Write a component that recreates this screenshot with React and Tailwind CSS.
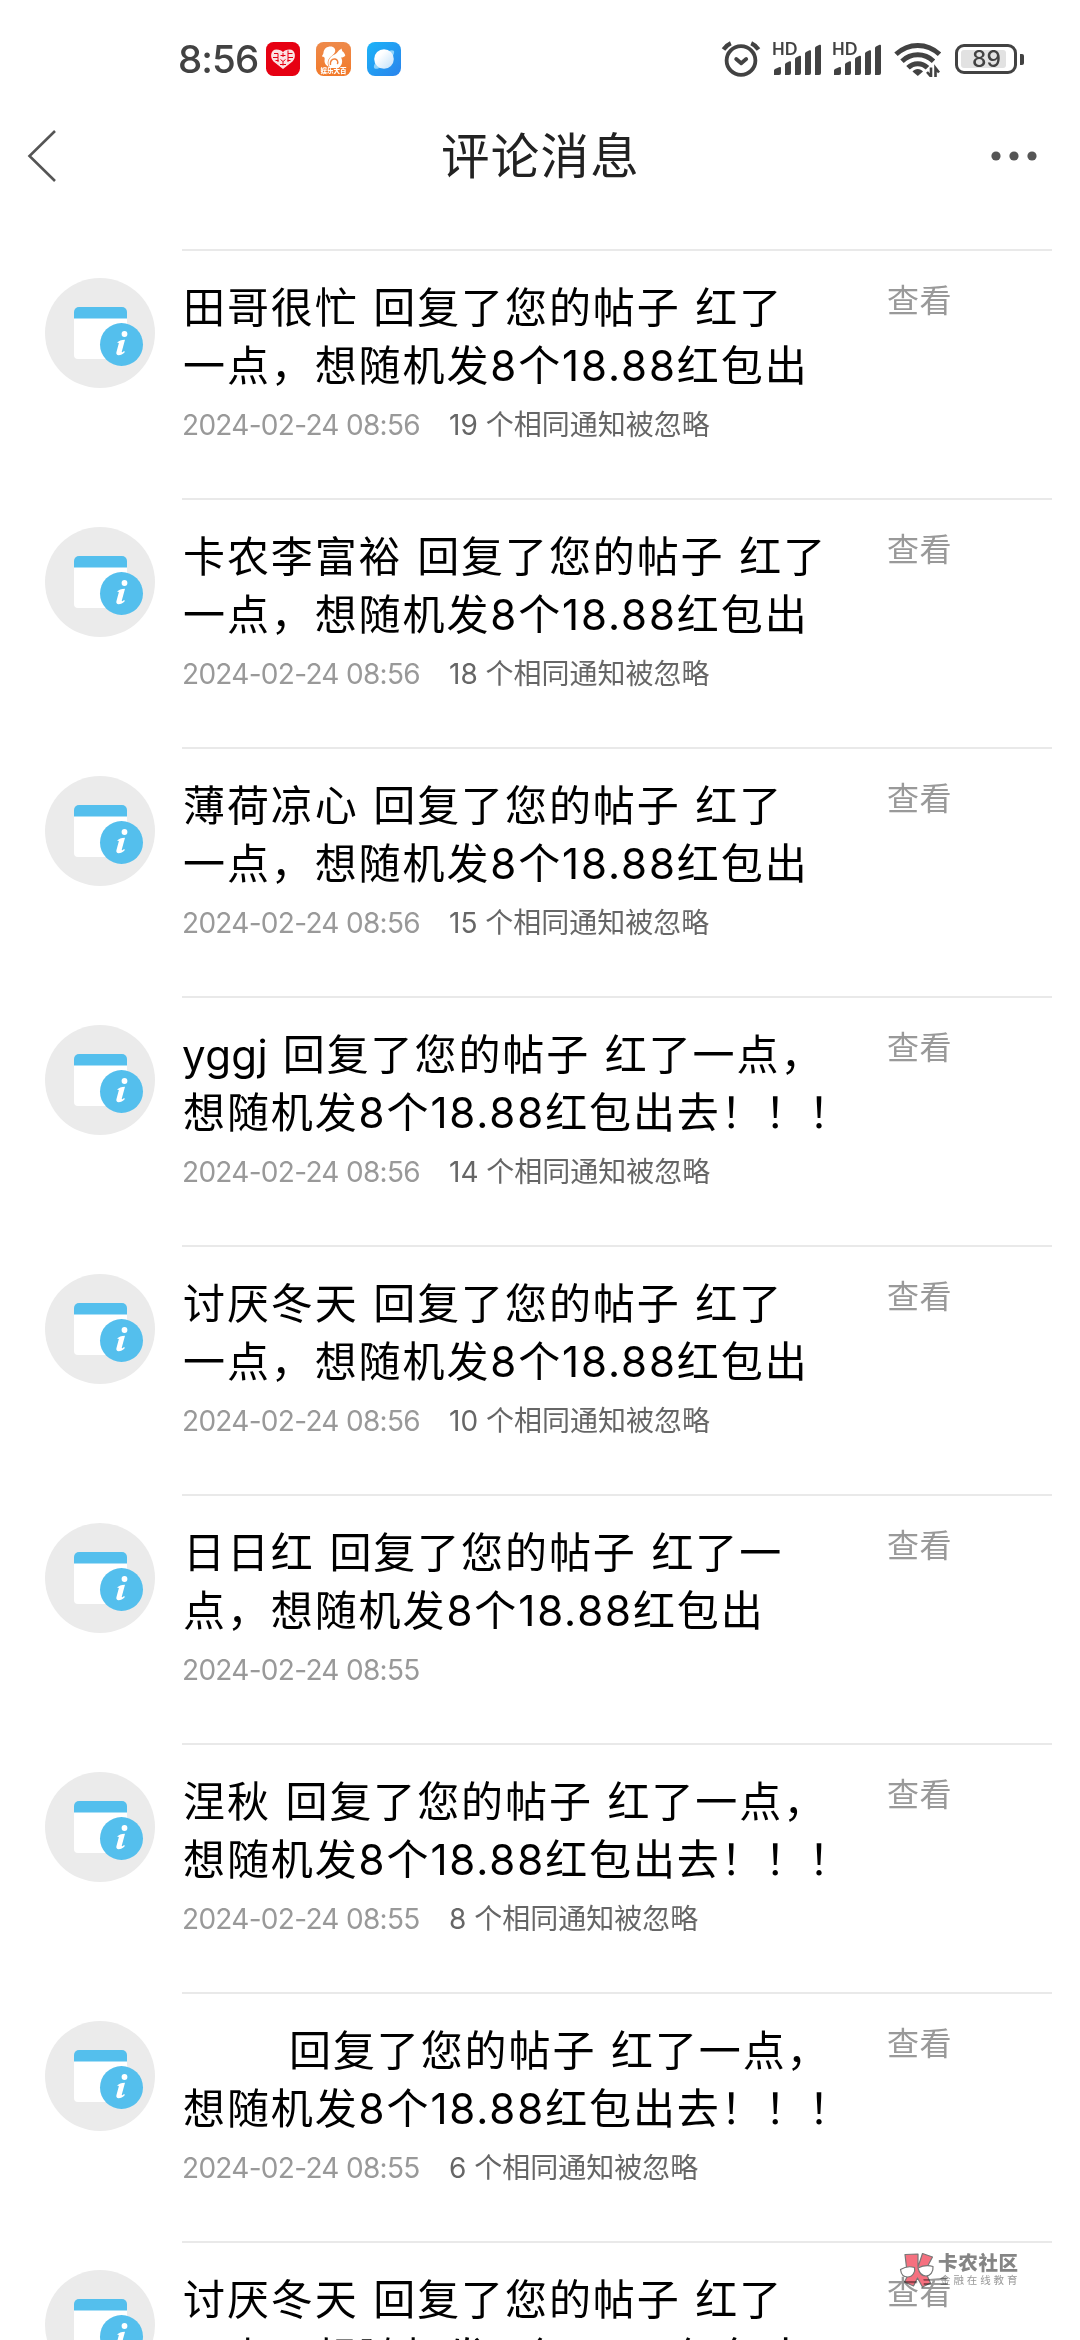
const TITLE_TAIL = "一点，想随机发8个18.88红包出";

const messages = [
  { lines: ["田哥很忙 回复了您的帖子 红了", TITLE_TAIL], time: "2024-02-24 08:56", ignored: 19 },
  { lines: ["卡农李富裕 回复了您的帖子 红了", TITLE_TAIL], time: "2024-02-24 08:56", ignored: 18 },
  { lines: ["薄荷凉心 回复了您的帖子 红了", TITLE_TAIL], time: "2024-02-24 08:56", ignored: 15 },
  { latinName: "yggj", lines: [" 回复了您的帖子 红了一点，", "想随机发8个18.88红包出去！！！"], time: "2024-02-24 08:56", ignored: 14 },
  { lines: ["讨厌冬天 回复了您的帖子 红了", TITLE_TAIL], time: "2024-02-24 08:56", ignored: 10 },
  { lines: ["日日红 回复了您的帖子 红了一", "点，想随机发8个18.88红包出"], time: "2024-02-24 08:55" },
  { lines: ["涅秋 回复了您的帖子 红了一点，", "想随机发8个18.88红包出去！！！"], time: "2024-02-24 08:55", ignored: 8 },
  { blankName: true, lines: ["回复了您的帖子 红了一点，", "想随机发8个18.88红包出去！！！"], time: "2024-02-24 08:55", ignored: 6 },
  { lines: ["讨厌冬天 回复了您的帖子 红了", TITLE_TAIL], time: "2024-02-24 08:55" },
];

function HeartApp() {
  return (
    <svg width="34" height="34" viewBox="0 0 34 34">
      <rect width="34" height="34" rx="7.5" fill="#e60012" />
      <path d="M17 27 7.500 19.500C3.500 15.500 4.500 7.500 10.500 7.500c3 0 5.300 1 6.500 2.700 1.200-1.700 3.500-2.700 6.500-2.700 6 0 7 8 3 12z" fill="#fbe3e3" />
      <g stroke="#e60012" strokeWidth="1" fill="none">
        <path d="M8 11.500h4v4H7M12 15.500v4.500M17 11v4M14.500 13.500h5M22 11.500h4.500M22 8.500v7h5M22 15.500v4.500M9.500 18.500h3M21.500 18.500h3M14.500 17.500l2.500 2 2.500-2M17 19.500v4M14 22.500h6" />
      </g>
    </svg>
  );
}

function SquirrelApp() {
  return (
    <div className="relative h-[34px] w-[35px]">
      <svg width="35" height="34" viewBox="0 0 35 34">
        <defs>
          <linearGradient id="squirrel" x1="0" y1="0" x2="0" y2="1">
            <stop offset="0" stopColor="#ee8a4b" />
            <stop offset="1" stopColor="#f27a2a" />
          </linearGradient>
        </defs>
        <rect width="35" height="34" rx="7.500" fill="url(#squirrel)" />
        <path d="M6 14.500c0-1.500 1.500-2 1.500-4C8 6.500 11 4.500 14.500 4.500c3.500 0 5.500 2.500 4.500 5.500-1 2.800-5 4.500-6.500 7.500-1.300 2.700-1 5 .5 7.500-3.500-1.500-5-4.500-4.300-8 .2-1.500-.7-2.500-2.700-2.500z" fill="#fff" />
        <path d="M22 9.500c1-1.500 2.500-2 3.500-3l.8 2.800c1.700 1 2.500 2.700 3 4.200-1 1.700-2.500 1.900-4.300 2 2.200 3.500 1.200 8-2.500 10.500h-8c-3.500-3.500-2.500-9 1.500-12 2-1.500 4.500-2 6-4.500z" fill="#fff" />
        <path d="M14.500 23c-.8-3.500 1.500-6.500 4.500-6 2.500.5 3.500 3 2.300 5" fill="none" stroke="#f0803a" strokeWidth="1.500" />
      </svg>
      <span className="absolute inset-x-0 bottom-[1px] text-center text-[6.500px] leading-[7px] font-black whitespace-nowrap text-white">
        娱乐大百
      </span>
    </div>
  );
}

function PlanetApp() {
  return (
    <svg width="34" height="34" viewBox="0 0 34 34">
      <defs>
        <linearGradient id="sky" x1="0" y1="0" x2="1" y2="1">
          <stop offset="0" stopColor="#1cb4f8" />
          <stop offset="1" stopColor="#2a83ec" />
        </linearGradient>
        <linearGradient id="globe" x1="0" y1="0" x2="1" y2="1">
          <stop offset="0.300" stopColor="#fff" />
          <stop offset="1" stopColor="#bfe0fa" />
        </linearGradient>
      </defs>
      <rect width="34" height="34" rx="8" fill="url(#sky)" />
      <ellipse cx="17" cy="17.500" rx="13" ry="4.500" transform="rotate(-42 17 17.500)" fill="#8fd3fb" />
      <circle cx="17" cy="17" r="9.800" fill="url(#globe)" />
    </svg>
  );
}

function AlarmIcon() {
  return (
    <svg width="40" height="38" viewBox="0 0 40 38" fill="none" stroke="#424242" strokeWidth="3.800" strokeLinecap="round" strokeLinejoin="round">
      <circle cx="20" cy="20.500" r="14.400" />
      <path d="m15.200 19 5 4.300 5-4.300" />
      <path d="M2.500 9.500c1.800-2.700 4.300-5 7.300-6.300M37.500 9.500c-1.800-2.700-4.300-5-7.300-6.300" strokeLinecap="butt" strokeWidth="4.200" />
    </svg>
  );
}

function SignalIcon() {
  return (
    <div className="relative h-[34px] w-[50px]">
      <span className="absolute -top-[1px] left-0 font-['Lato'] text-[16.500px] leading-[16px] font-bold text-[#424242]">HD</span>
      <svg width="50" height="34" viewBox="0 0 50 34" fill="#424242">
        <path d="M2 33V28.500q0-1 1-1.500l4.500-2q1.500-.5 1.500 1V31q0 2-2 2zM13 33V22.500q0-1 1-1.500l3.500-1.700q1.500-.5 1.500 1V31q0 2-2 2zM23 33V17q0-1 1-1.500l3.500-1.700q1.500-.5 1.500 1V31q0 2-2 2zM33 33V11.500q0-1 1-1.500l3.500-1.700q1.500-.5 1.500 1V31q0 2-2 2zM43 33V6q0-1 1-1.500l3.500-1.700q1.500-.5 1.500 1V31q0 2-2 2z" />
      </svg>
    </div>
  );
}

function WifiIcon() {
  return (
    <svg width="48" height="36" viewBox="0 0 48 36" fill="none" stroke="#424242" strokeWidth="5">
      <path d="M2 13.300C14.500 1.500 33 1.500 45.500 13.300" />
      <path d="M8 20.200c9-8.500 22.500-8.500 31.500 0" />
      <path d="M14 26.800c5.500-5.500 14-5.500 19.500 0" />
      <path d="m18.500 30.500c2.500-3.500 8-3.500 10.500 0l-5.200 4.500z" fill="#424242" stroke="none" />
      <path d="M37 26.500v9l-4-4.500M41.500 36V27l3.500 4.500" strokeWidth="2.600" />
    </svg>
  );
}

function Battery() {
  return (
    <div className="flex items-center gap-[3px]">
      <div className="flex h-[30px] w-[62px] rounded-[9px] border-[3px] border-[#424242] p-[3px]">
        <div className="flex w-[45px] items-center justify-center rounded-[3px] bg-[#e2e2e2] pl-[6px] text-[23px] leading-none font-medium text-[#424242]">
          89
        </div>
      </div>
      <div className="h-[11px] w-[4px] rounded-r-[2px] bg-[#424242]" />
    </div>
  );
}

function StatusBar() {
  return (
    <div className="flex h-[118px] items-center pr-[56px] pl-[178px]">
      <span className="w-[88px] text-[38.500px] leading-none font-medium tracking-[-0.900px] text-[#424242]">8:56</span>
      <div className="flex gap-4">
        <HeartApp />
        <SquirrelApp />
        <PlanetApp />
      </div>
      <div className="ml-auto flex items-center">
        <AlarmIcon />
        <div className="ml-[11px] flex gap-[10px]">
          <SignalIcon />
          <SignalIcon />
        </div>
        <div className="ml-[12px]">
          <WifiIcon />
        </div>
        <div className="ml-[13px]">
          <Battery />
        </div>
      </div>
    </div>
  );
}

function TitleBar() {
  return (
    <header className="flex h-[76px] items-center justify-between pr-[42px] pl-[27px]">
      <svg width="64" height="54" viewBox="0 0 64 54" fill="none" stroke="#555" strokeWidth="2.600">
        <path d="M28 2 2.500 27 28 52" />
      </svg>
      <h1 className="pt-[2px] text-[48.500px] leading-none tracking-[1.200px] text-[#222]">评论消息</h1>
      <svg width="48" height="12" viewBox="0 0 48 12" fill="#555">
        <circle cx="6" cy="6" r="4.600" />
        <circle cx="24" cy="6" r="4.600" />
        <circle cx="42" cy="6" r="4.600" />
      </svg>
    </header>
  );
}

function NoticeAvatar() {
  return (
    <svg className="shrink-0" width="110" height="110" viewBox="0 0 110 110">
      <circle cx="55" cy="55" r="55" fill="#ebebeb" />
      <path d="M29 40h53v37a4 4 0 0 1-4 4H33a4 4 0 0 1-4-4z" fill="#fff" />
      <path d="M29 40.500V34a5 5 0 0 1 5-5h43a5 5 0 0 1 5 5v6.500z" fill="#54bfed" />
      <circle cx="76.500" cy="66.500" r="21.500" fill="#54bfed" />
      <circle cx="79.500" cy="56" r="2.900" fill="#fff" />
      <path d="M72 64.500c2-1.500 4-2.500 8-2.700l-3.200 11.700c-.2 1 .6.800 2.300-.6l.8 1c-2 2.200-4.300 3.300-6.300 3.300-1.800 0-2.600-1.200-2.200-2.900l2.500-9.200z" fill="#fff" />
    </svg>
  );
}

function MessageRow({ message }) {
  return (
    <li className="flex h-[249px] pl-[45px]">
      <div className="pt-[29px]">
        <NoticeAvatar />
      </div>
      <div className="ml-[27px] flex w-[870px] border-t-2 border-[#e9e9e9]">
        <div className="w-[705px] pt-[28px]">
          <div className="pl-px text-[42px] leading-[58px] tracking-[1.900px] whitespace-nowrap text-black [word-spacing:1px]">
            {message.lines.map((line, i) => (
              <p key={i} className={message.blankName && i === 0 ? "pl-[106px]" : ""}>
                {i === 0 && message.latinName && <span className="-ml-px tracking-[0.400px]">{message.latinName}</span>}
                {line}
              </p>
            ))}
          </div>
          <div className="mt-[10px] flex gap-[29px] text-[28px] leading-[40px] whitespace-nowrap">
            <time className="w-[238px] tracking-[-0.700px] text-[#999]">{message.time}</time>
            {message.ignored && <span className="text-[#666]">{message.ignored} 个相同通知被忽略</span>}
          </div>
        </div>
        <a className="h-fit pt-[26px] text-[32px] leading-[48px] tracking-[0.500px] text-[#999]">查看</a>
      </div>
    </li>
  );
}

function Watermark() {
  return (
    <div className="absolute top-[2252px] left-[899px] flex gap-[3px] mix-blend-multiply">
      <svg width="36" height="36" viewBox="0 0 36 36" stroke="#777" strokeWidth="1.200" strokeLinejoin="round">
        <path d="M6 2.500 19 2v13l4.500-13.500L33.500 5 26 19l5.500 12-8 4-5-9-4 8-9-4L8.500 24z" fill="#f5707f" />
        <path d="M1.500 17.500c4-2.500 9-3.500 14-2 1 4-1.500 9.500-7 9.500-4.500 0-6.500-3.500-7-7.500zM19 16c5-2.500 10-3 15-1.500.5 5-2.500 9.500-7 9.500-4.500 0-7-4-8-8z" fill="#fff" />
      </svg>
      <div className="text-[#858585]">
        <p className="text-[19.500px] leading-[22px] font-black tracking-[0.700px] whitespace-nowrap">卡农社区</p>
        <p className="mt-[1px] ml-[2px] text-[10.500px] leading-[12px] tracking-[2.900px] whitespace-nowrap text-[#999]">金融在线教育</p>
      </div>
    </div>
  );
}

export default function App() {
  return (
    <div className="relative h-[2340px] w-[1080px] overflow-hidden bg-white font-['Inter','Noto_Sans_CJK_SC',sans-serif]">
      <StatusBar />
      <TitleBar />
      <ul className="mt-[55px]">
        {messages.map((message, i) => (
          <MessageRow key={i} message={message} />
        ))}
      </ul>
      <Watermark />
    </div>
  );
}
